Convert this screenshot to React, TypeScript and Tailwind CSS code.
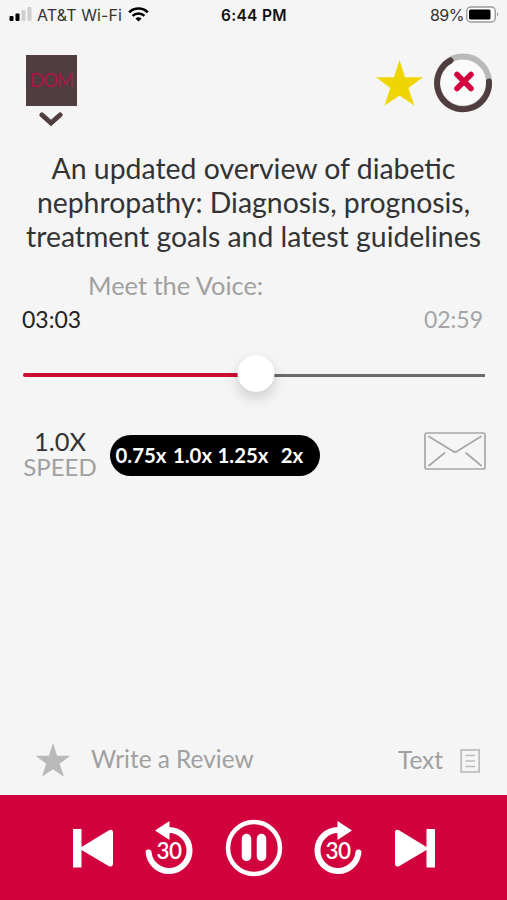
import React, { useState } from 'react'

const speeds = [
  { label: '0.75x', width: 'w-[58px]' },
  { label: '1.0x', width: 'w-[45px]' },
  { label: '1.25x', width: 'w-[56px]' },
  { label: '2x', width: 'w-[42px]' },
]

function StatusBar() {
  return (
    <div className="flex h-[30px] items-center pl-[9px] pr-[8px] font-[Inter,sans-serif] text-[16px] leading-none text-[#333]">
      <div className="flex w-[212px] items-center">
        <svg className="-mt-px h-[15px] w-[24px]" viewBox="0 0 24 15">
          <rect x="0.5" y="9" width="4" height="5" rx="1" fill="#000" />
          <rect x="6.5" y="6.5" width="4" height="7.5" rx="1" fill="#000" />
          <rect x="12.5" y="3" width="4" height="11" rx="1" fill="#cfcfcf" />
          <rect x="18.5" y="0" width="4" height="14" rx="1" fill="#cfcfcf" />
        </svg>
        <span className="ml-[4px] w-[86px] whitespace-nowrap text-[16px] tracking-[0.1px]">AT&amp;T Wi-Fi</span>
        <svg className="-mt-px ml-[5px] h-[15px] w-[21px]" viewBox="0 0 21 15" fill="none" stroke="#000">
          <path d="M1.2 5.4a13.2 13.2 0 0 1 18.6 0" strokeWidth="2.6" />
          <path d="M4.6 8.9a8.4 8.4 0 0 1 11.8 0" strokeWidth="2.5" />
          <path d="M10.5 14.5 7.4 11.5a4.4 4.4 0 0 1 6.2 0z" fill="#000" stroke="none" />
        </svg>
      </div>
      <span className="mt-px w-[68px] whitespace-nowrap text-[15.5px] font-semibold tracking-[0.3px] text-[#111]">6:44 PM</span>
      <div className="ml-auto flex items-center">
        <span className="text-[16px] tracking-[-0.5px]">89%</span>
        <svg className="-mt-[2px] ml-[2px] h-[17px] w-[33px]" viewBox="0 0 33 17">
          <rect x="0.8" y="1" width="28.5" height="15" rx="4" fill="#fff" stroke="#999" strokeWidth="1.4" />
          <rect x="3" y="3.5" width="21.5" height="10" rx="1.5" fill="#000" />
          <path d="M31 6.5c1.6.6 1.6 3.400 0 4z" fill="#999" />
        </svg>
      </div>
    </div>
  )
}

function Star({ className }: { className: string }) {
  return (
    <svg className={className} viewBox="0 0 47 46" fill="currentColor">
      <path d="M23.500 0 29 17.300H47L32.400 28 38.300 45.500 23.500 35.500 8.500 45.500 14.300 28 0 17.300H18z" />
    </svg>
  )
}

function Header() {
  return (
    <header className="flex h-[121px] items-start pl-[26px] pr-[14px]">
      <div className="flex w-[51px] flex-col items-center pt-[25px]">
        <div className="flex h-[51px] w-[51px] items-center justify-center bg-[#503d3f] font-[Lato,sans-serif] text-[18.5px] tracking-[-1px] text-[#a91649]">
          DOM
        </div>
        <svg className="mt-[5px] h-[17px] w-[26px]" viewBox="0 0 26 17" fill="none" stroke="#503d3f" strokeWidth="5">
          <path d="M3 4 12 12 21 4" strokeLinecap="round" />
        </svg>
      </div>
      <Star className="ml-auto mt-[30px] h-[46px] w-[47px] text-[#efd503]" />
      <svg className="ml-[10px] mt-[22px] h-[60px] w-[60px] overflow-visible" viewBox="0 0 60 60" fill="none">
        <circle cx="30" cy="30.500" r="24" fill="#fafafa" />
        <circle cx="30" cy="30.500" r="26" stroke="#b9b9b9" strokeWidth="6" />
        <path d="M17.500 8.500A26 26 0 1 0 56 29.500" stroke="#503d3f" strokeWidth="6" strokeLinecap="round" />
        <path d="M24 22.500 38 36.500M38 22.500 24 36.500" stroke="#d1023e" strokeWidth="5.500" strokeLinecap="round" />
      </svg>
    </header>
  )
}

function Progress({ value }: { value: number }) {
  return (
    <div className="relative flex h-[38px] items-center pt-[2px]">
      <div className="h-[4px] rounded-l bg-[#c9102f]" style={{ width: `${value}%` }} />
      <div className="mt-[1px] h-[3px] flex-1 bg-[#6a6a6a]" />
      <div
        className="absolute top-0 h-[37px] w-[37px] -translate-x-1/2 rounded-full bg-white shadow-[0_6px_14px_rgba(0,0,0,0.17)]"
        style={{ left: `${value}%` }}
      />
    </div>
  )
}

function Skip({ flip }: { flip?: boolean }) {
  return (
    <svg className={flip ? 'h-[40px] w-[42px] -scale-x-100' : 'h-[40px] w-[42px]'} viewBox="0 0 42 40" fill="#fff">
      <path d="M1 1h8.500v18L37 2.200Q40.800 0.500 41 4V36Q40.800 39.500 37 38.300L9.500 22V39.500H1z" />
    </svg>
  )
}

function Seek({ flip }: { flip?: boolean }) {
  return (
    <div className="relative flex h-[54px] w-[50px] items-center justify-center">
      <svg className={flip ? 'h-[54px] w-[50px] -scale-x-100' : 'h-[54px] w-[50px]'} viewBox="0 0 50 54" fill="none">
        <path d="M25 10A20.500 20.500 0 1 1 4.600 32.500" stroke="#fff" strokeWidth="6" strokeLinecap="round" />
        <path d="M25.500 1V20L11 10.500z" fill="#fff" />
      </svg>
      <span className="absolute top-[18px] left-0 w-full text-center text-[22.5px] leading-[26px] font-semibold tracking-[-0.5px] text-white">
        30
      </span>
    </div>
  )
}

export default function App() {
  const [speed, setSpeed] = useState('1.0')

  return (
    <div className="flex h-[900px] w-[507px] flex-col overflow-hidden bg-[#f5f5f5] font-[Lato,sans-serif]">
      <StatusBar />
      <Header />

      <h1 className="text-center text-[28.4px] leading-[34px] whitespace-nowrap text-[#333]">
        An updated overview of diabetic
        <br />
        nephropathy: Diagnosis, prognosis,
        <br />
        treatment goals and latest guidelines
      </h1>
      <p className="mt-[16px] pl-[88px] text-[25.4px] leading-[32px] text-[#a0a0a0]">Meet the Voice:</p>

      <div className="mt-[2px] flex h-[32px] items-center justify-between pr-[24px] pl-[22px] text-[23px]">
        <span className="text-[#222]">03:03</span>
        <span className="text-[#a5a5a5]">02:59</span>
      </div>
      <div className="mt-[20px] pr-[22px] pl-[23px]">
        <Progress value={50.5} />
      </div>

      <div className="mt-[37px] flex items-start pr-[21px] pl-[22px]">
        <div className="-mt-[2px] flex w-[76px] flex-col items-center leading-[26px]">
          <span className="text-[25.4px] text-[#333]">{speed}X</span>
          <span className="text-[24px] text-[#a0a0a0]">SPEED</span>
        </div>
        <div className="mt-[5px] ml-[12px] flex h-[41px] w-[210px] items-center rounded-full bg-black pl-[2px] text-[20.4px] font-bold text-white">
          {speeds.map(s => (
            <button key={s.label} className={`${s.width} text-center whitespace-nowrap`} onClick={() => setSpeed(s.label.replace('x', ''))}>
              {s.label}
            </button>
          ))}
        </div>
        <svg className="mt-[2px] ml-auto h-[38px] w-[62px]" viewBox="0 0 62 38" fill="none" stroke="#a7a7a7" strokeWidth="1.7">
          <rect x="1" y="1" width="60" height="36" rx="2" />
          <path d="M5 4.500 28.500 19Q31 21 33.500 19L57 4.500M5 33.500 20.500 21M57 33.500 42 21" strokeLinecap="round" />
        </svg>
      </div>

      <div className="mt-auto flex h-[70px] items-center pr-[26px] pl-[35px] text-[24.4px] text-[#a0a0a0]">
        <Star className="h-[34px] w-[36px] text-[#b9b9b9]" />
        <span className="-mt-[2px] ml-[20px]">Write a Review</span>
        <span className="ml-auto">Text</span>
        <svg className="mt-[2px] ml-[17px] h-[24px] w-[21px]" viewBox="0 0 21 24" fill="none" stroke="#bcbcbc" strokeWidth="1.7">
          <rect x="1.200" y="1" width="18" height="22" />
          <path d="M5.500 6.500h9.500M5.500 12h9.500M5.500 17.500h9.500" />
        </svg>
      </div>

      <footer className="flex h-[105px] items-center bg-[#d1023e] pl-[72px]">
        <Skip />
        <div className="-mt-[2px] ml-[30px]"><Seek /></div>
        <svg className="ml-[31px] h-[58px] w-[58px]" viewBox="0 0 58 58" fill="none" stroke="#fff">
          <circle cx="29" cy="29" r="26" strokeWidth="4.500" />
          <path d="M21.500 19.500v18M36.500 19.500v18" strokeWidth="9.500" strokeLinecap="round" />
        </svg>
        <div className="-mt-[2px] ml-[30px]"><Seek flip /></div>
        <div className="ml-[31px]"><Skip flip /></div>
      </footer>
    </div>
  )
}
